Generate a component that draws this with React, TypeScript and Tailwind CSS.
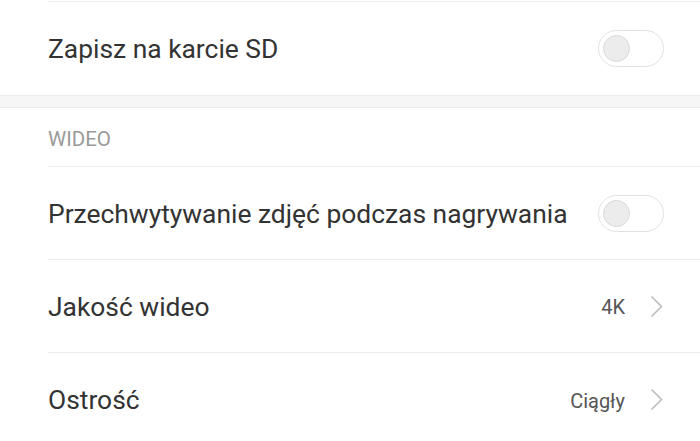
import React from "react";

function Toggle() {
  return (
    <div className="relative w-[66px] h-[37px] rounded-full border-[1.5px] border-[#e2e2e2] bg-white shrink-0">
      <div className="absolute left-[4px] top-[4px] w-[27px] h-[27px] rounded-full bg-[#ececec] border border-[#d9d9d9]" />
    </div>
  );
}

function Chevron() {
  return (
    <svg width="13" height="23" viewBox="0 0 13 23" className="shrink-0">
      <path d="M1.5 1.5 L11.5 11.5 L1.5 21.5" fill="none" stroke="#bdbdbd" strokeWidth="1.6" />
    </svg>
  );
}

function Row({ label, right, last }: { label: string; right: React.ReactNode; last?: boolean }) {
  return (
    <div className={`h-[93px] flex items-center justify-between pr-[36px] ${last ? "" : "border-b border-[#ebebeb]"}`}>
      <span className="text-[26.4px] text-[#333333] leading-none pt-[2px]">{label}</span>
      {right}
    </div>
  );
}

function Value({ text }: { text: string }) {
  return (
    <div className="flex items-center gap-[25px] pr-[1px]">
      <span className="text-[20px] text-[#555555] pt-[2px]">{text}</span>
      <Chevron />
    </div>
  );
}

export default function App() {
  return (
    <div className="w-[700px] h-[441px] overflow-hidden bg-white" style={{ fontFamily: "Roboto, 'Noto Sans', sans-serif" }}>
      <div className="pl-[48px] pt-[1px]">
        <div className="border-t border-[#ebebeb]" />
        <div className="h-[93px] flex items-center justify-between pr-[36px]">
          <span className="text-[26.4px] text-[#333333] leading-none pt-[2px]">Zapisz na karcie SD</span>
          <Toggle />
        </div>
      </div>
      <div className="h-[13px] bg-[#f6f6f6] border-y border-[#ebebeb]" />
      <div className="pl-[48px]">
        <div className="h-[59px] flex items-center border-b border-[#ebebeb] pt-[4px]">
          <span className="text-[20.5px] text-[#9a9a9a] leading-none">WIDEO</span>
        </div>
        <Row label="Przechwytywanie zdjęć podczas nagrywania" right={<Toggle />} />
        <Row label="Jakość wideo" right={<Value text="4K" />} />
        <Row label="Ostrość" right={<Value text="Ciągły" />} last />
      </div>
    </div>
  );
}
